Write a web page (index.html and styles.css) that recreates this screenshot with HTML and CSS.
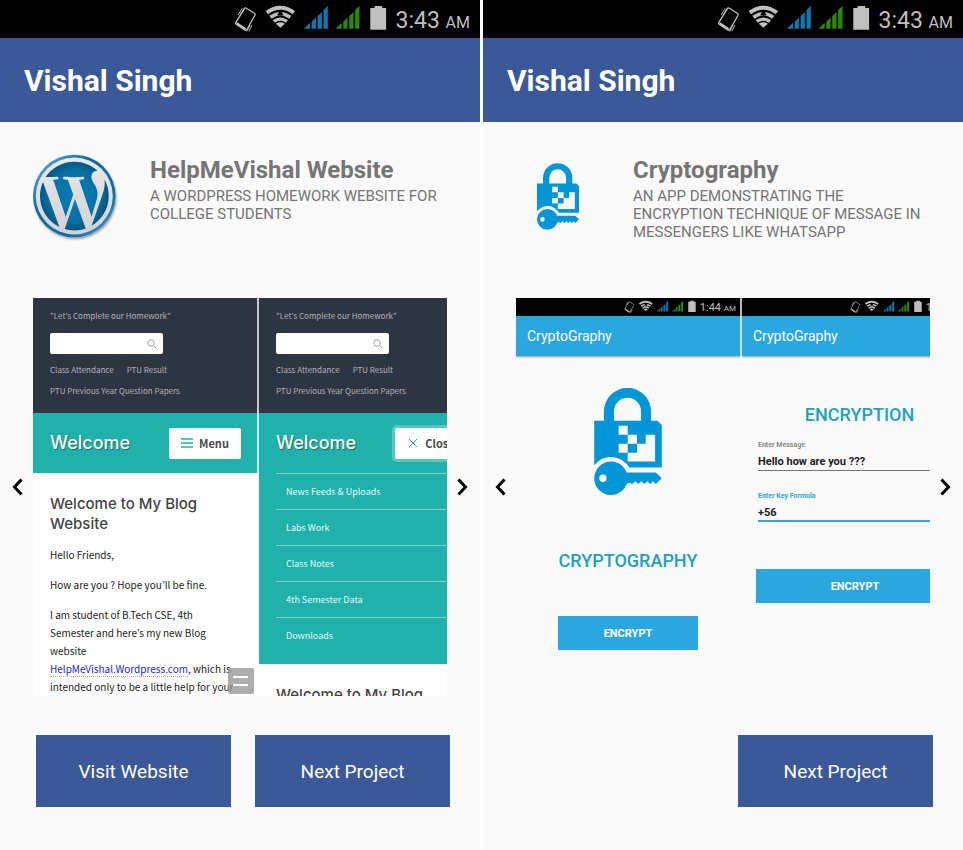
FILE: index.html
```html
<!DOCTYPE html>
<html lang="en">
<head>
<meta charset="utf-8">
<title>Vishal Singh</title>
<link rel="stylesheet" href="styles.css">
</head>
<body>
<svg class="defs" aria-hidden="true">
  <symbol id="status-icons" viewBox="700 15 463 85">
    <g fill="none" stroke="#bfbfbf" stroke-width="4" stroke-linejoin="round">
      <path d="M737 25L762 41Q764 43 763 46L738 90Q736 93 733 91L706 73Q703 71 705 68L731 26Q733 22 737 25Z"/>
      <path d="M707 71L734 89" stroke-width="8"/>
      <path d="M712 46L724 25M718 46L730 25M738 95L748 76M744 95L754 76" stroke-width="3"/>
    </g>
    <g fill="none" stroke="#bfbfbf">
      <path d="M799 38Q840 9 881 38" stroke-width="12"/>
      <path d="M810 52Q840 31 870 52" stroke-width="11"/>
      <path d="M820 65Q840 51 860 65" stroke-width="10"/>
    </g>
    <path d="M826 72Q840 63 854 72L840 84Z" fill="#bfbfbf"/>
    <path d="M840 29L850 47H830Z" fill="#000"/>
    <path d="M912 87L930 69V87ZM935 66L948 53V87H935ZM953 49L966 36V87H953ZM971 31L984 17V87H971Z" fill="#0b78b0"/>
    <path d="M1008 87L1026 69V87ZM1031 66L1044 53V87H1031ZM1049 49L1062 36V87H1049ZM1067 31L1080 17V87H1067Z" fill="#2a8a08"/>
    <path d="M1113 24H1126V18H1149V24H1161V90H1113Z" fill="#bfbfbf"/>
  </symbol>
  <symbol id="lock" viewBox="329 292 202 320">
    <g fill="#0096d8" fill-rule="evenodd">
      <path d="M358 392V362a70 70 0 0 1 141 0V392H469V362a40 40 0 0 0-81 0V392Z"/>
      <path d="M329 390H518L531 403V530H434A63 63 0 0 0 329 523ZM402 405V432H429V405ZM429 432V459H457V432ZM402 459V486H429V459ZM483 432V459H457V486H429V512H511V432Z"/>
      <path d="M329 562a50 50 0 1 1 100 0a50 50 0 1 1-100 0ZM344 562a11 11 0 1 0 22 0a11 11 0 1 0-22 0Z"/>
      <path d="M422 545H513L531 562L513 579L505 571L496 579L488 571L479 579L470 571L461 579L452 571L443 579L434 575L422 580Z"/>
    </g>
  </symbol>
  <symbol id="prev" viewBox="0 0 11 18"><path d="M9.500 1.500L2.500 9L9.500 16.500" fill="none" stroke="#000" stroke-width="3"/></symbol>
  <symbol id="next" viewBox="0 0 11 18"><path d="M1.500 1.500L8.500 9L1.500 16.500" fill="none" stroke="#000" stroke-width="3"/></symbol>
  <symbol id="search" viewBox="0 0 10 10"><g fill="none" stroke="#a5a5a5"><circle cx="4" cy="4" r="3.300"/><path d="M6.500 6.500L9.500 9.500"/></g></symbol>
</svg>

<main class="phones">
  <section class="phone">
    <div class="status"><svg class="status-icons"><use href="#status-icons"/></svg><span class="time">3:43 <small>AM</small></span></div>
    <header class="appbar"><h1>Vishal Singh</h1></header>
    <div class="project">
      <div class="logo">
        <svg class="wp" viewBox="0 0 24 24" role="img" aria-label="WordPress">
          <defs>
            <linearGradient id="rim" x1="0" y1="0" x2="1" y2="1"><stop offset="0" stop-color="#6db8ea"/><stop offset=".35" stop-color="#0b6da3"/><stop offset=".7" stop-color="#0b6da3"/><stop offset="1" stop-color="#4f9fd4"/></linearGradient>
            <linearGradient id="plate" x1="0" y1="0" x2="0" y2="1"><stop offset="0" stop-color="#e9e9ea"/><stop offset="1" stop-color="#d2d2d4"/></linearGradient>
            <radialGradient id="face"><stop offset="0" stop-color="#0a7db5"/><stop offset=".75" stop-color="#0570a6"/><stop offset="1" stop-color="#045480"/></radialGradient>
          </defs>
          <circle cx="11.800" cy="12" r="11.800" fill="url(#rim)"/>
          <circle cx="11.800" cy="12" r="11" fill="url(#plate)"/>
          <path transform="translate(.9 1.100) scale(.91)" fill="url(#face)" d="M21.469 6.825c.84 1.537 1.318 3.300 1.318 5.175 0 3.979-2.156 7.456-5.363 9.325l3.295-9.527c.615-1.540.820-2.771.820-3.864 0-.405-.026-.780-.070-1.110m-7.981.105c.647-.030 1.232-.105 1.232-.105.582-.075.514-.930-.067-.899 0 0-1.755.135-2.880.135-1.064 0-2.850-.150-2.850-.150-.585-.030-.661.855-.075.885 0 0 .540.061 1.125.090l1.680 4.605-2.370 7.080L5.354 6.900c.649-.030 1.234-.100 1.234-.100.585-.075.516-.930-.065-.896 0 0-1.746.138-2.874.138-.200 0-.438-.008-.690-.015C4.911 3.150 8.235 1.215 12 1.215c2.809 0 5.365 1.072 7.286 2.833-.046-.003-.091-.009-.141-.009-1.060 0-1.812.923-1.812 1.914 0 .890.513 1.643 1.060 2.531.411.720.890 1.643.890 2.977 0 .915-.354 1.994-.821 3.479l-1.075 3.585-3.900-11.610zM12 22.784c-1.059 0-2.081-.153-3.048-.437l3.237-9.406 3.315 9.087c.024.053.050.101.078.149-1.120.393-2.325.609-3.582.609M1.211 12c0-1.564.336-3.050.935-4.390L7.290 21.709C3.694 19.960 1.212 16.271 1.211 12"/>
        </svg>
      </div>
      <div class="about">
        <h2>HelpMeVishal Website</h2>
        <p>A WORDPRESS HOMEWORK WEBSITE FOR COLLEGE STUDENTS</p>
      </div>
    </div>
    <div class="carousel">
      <button class="arrow" aria-label="Previous"><svg><use href="#prev"/></svg></button>
      <div class="slides">
        <article class="shot blog">
          <div class="masthead">
            <p>"Let's Complete our Homework"</p>
            <div class="search"><input type="text" aria-label="Search"><svg><use href="#search"/></svg></div>
            <nav><a href="#">Class Attendance</a><a href="#">PTU Result</a><a href="#">PTU Previous Year Question Papers</a></nav>
          </div>
          <div class="banner"><h3>Welcome</h3><button class="toggle"><svg viewBox="0 0 12 10"><path d="M0 1H12M0 5H12M0 9H12" stroke="#20b2aa" stroke-width="1.300"/></svg>Menu</button></div>
          <div class="post">
            <h4>Welcome to My Blog Website</h4>
            <p>Hello Friends,</p>
            <p>How are you ? Hope you’ll be fine.</p>
            <p>I am student of B.Tech CSE, 4th Semester and here’s my new Blog website<br><a href="#">HelpMeVishal.Wordpress.com</a>, which is intended only to be a little help for your</p>
          </div>
          <button class="float" aria-label="Open menu"><svg viewBox="0 0 26 26"><path d="M5 9H20M5 17H20" stroke="#fff" stroke-width="2"/></svg></button>
        </article>
        <article class="shot blog">
          <div class="masthead">
            <p>"Let's Complete our Homework"</p>
            <div class="search"><input type="text" aria-label="Search"><svg><use href="#search"/></svg></div>
            <nav><a href="#">Class Attendance</a><a href="#">PTU Result</a><a href="#">PTU Previous Year Question Papers</a></nav>
          </div>
          <div class="banner"><h3>Welcome</h3><button class="toggle open"><svg viewBox="0 0 12 10"><path d="M2 1L10 9M10 1L2 9" stroke="#20b2aa"/></svg>Close</button></div>
          <ul class="menu">
            <li><a href="#">News Feeds &amp; Uploads</a></li>
            <li><a href="#">Labs Work</a></li>
            <li><a href="#">Class Notes</a></li>
            <li><a href="#">4th Semester Data</a></li>
            <li><a href="#">Downloads</a></li>
          </ul>
          <div class="post"><h4>Welcome to My Blog</h4></div>
        </article>
      </div>
      <button class="arrow" aria-label="Next"><svg><use href="#next"/></svg></button>
    </div>
    <div class="actions"><button class="action">Visit Website</button><button class="action">Next Project</button></div>
  </section>

  <section class="phone">
    <div class="status"><svg class="status-icons"><use href="#status-icons"/></svg><span class="time">3:43 <small>AM</small></span></div>
    <header class="appbar"><h1>Vishal Singh</h1></header>
    <div class="project">
      <div class="logo"><svg class="lock-small"><use href="#lock"/></svg></div>
      <div class="about">
        <h2>Cryptography</h2>
        <p>AN APP DEMONSTRATING THE ENCRYPTION TECHNIQUE OF MESSAGE IN MESSENGERS LIKE WHATSAPP</p>
      </div>
    </div>
    <div class="carousel">
      <button class="arrow" aria-label="Previous"><svg><use href="#prev"/></svg></button>
      <div class="slides">
        <article class="shot crypto">
          <div class="status"><svg class="status-icons"><use href="#status-icons"/></svg><span class="time">1:44 <small>AM</small></span></div>
          <div class="appbar"><h3>CryptoGraphy</h3></div>
          <div class="splash">
            <svg class="lock-large"><use href="#lock"/></svg>
            <h4>CRYPTOGRAPHY</h4>
            <button class="encrypt">ENCRYPT</button>
          </div>
        </article>
        <article class="shot crypto">
          <div class="status"><svg class="status-icons"><use href="#status-icons"/></svg><span class="time">1:44 <small>AM</small></span></div>
          <div class="appbar"><h3>CryptoGraphy</h3></div>
          <form class="form">
            <h4>ENCRYPTION</h4>
            <div class="field"><label for="msg">Enter Message</label><input id="msg" type="text" value="Hello how are you ???"></div>
            <div class="field active"><label for="key">Enter Key Formula</label><input id="key" type="text" value="+56"></div>
            <button class="encrypt" type="button">ENCRYPT</button>
          </form>
        </article>
      </div>
      <button class="arrow" aria-label="Next"><svg><use href="#next"/></svg></button>
    </div>
    <div class="actions"><button class="action last">Next Project</button></div>
  </section>
</main>
</body>
</html>
```
FILE: styles.css
```css
* { box-sizing: border-box; }
body, h1, h2, h3, h4, p, ul { margin: 0; padding: 0; }
body { background: #fff; font-family: Roboto, "Liberation Sans", sans-serif; }
button, input { font: inherit; border: 0; padding: 0; margin: 0; border-radius: 0; }
svg { display: block; }
.defs { position: absolute; width: 0; height: 0; }

.phones { display: grid; grid-template-columns: 1fr 1fr; gap: 3px; min-height: 100vh; }
.phone { background: #fafafa; min-width: 0; }

.status { display: flex; align-items: center; justify-content: flex-end; gap: 8px; height: 38px; padding-right: 10px; background: #000; color: #bfbfbf; }
.status-icons { width: 155px; height: 28px; flex: none; }
.time { padding-top: 2px; font-size: 23px; white-space: nowrap; }
.time small { font-size: 16px; }
.appbar { display: flex; align-items: center; height: 84px; padding-left: 24px; background: #3b5998; color: #fff; }
.appbar h1 { font-size: 30px; font-weight: 700; }

.project { display: grid; grid-template-columns: 84px 1fr; gap: 33px; align-items: start; min-height: 176px; padding: 31px 30px 0 33px; color: #757575; }
.logo { display: grid; place-items: center; height: 86px; }
.wp { width: 84px; height: 84px; filter: drop-shadow(1px 2px 1px #0005); }
.lock-small { width: 42px; height: 67px; }
.about { padding-top: 3px; }
.about h2 { font-size: 24px; line-height: 28px; font-weight: 700; }
.about p { padding-top: 3px; font-size: 15px; line-height: 18px; }

.carousel { display: grid; grid-template-columns: 33px minmax(0, 1fr) 33px; height: 398px; }
.arrow { display: flex; align-items: center; justify-content: flex-end; padding: 0 10px; padding-bottom: 20px; background: none; }
.arrow:last-child { justify-content: flex-start; }
.arrow svg { width: 11px; height: 18px; }
.slides { display: flex; overflow: hidden; }
.shot { position: relative; flex: 0 0 226px; height: 100%; overflow: hidden; }
.shot::after { content: ""; position: absolute; top: 0; right: 0; width: 2px; height: 100%; background: #fffb; }

.blog { background: #fff; font-family: "Noto Sans CJK KR", "Noto Sans", sans-serif; }
.masthead { height: 115px; padding: 10px 17px 0; background: #2e3542; color: #b0b3b8; font-size: 8px; line-height: 16px; }
.search { position: relative; width: 113px; margin-top: 9px; }
.search input { display: block; width: 100%; height: 21px; padding: 0 20px 0 6px; border-radius: 2px; background: #fff; }
.search svg { position: absolute; top: 6px; right: 6px; width: 10px; height: 10px; }
.masthead nav { display: flex; flex-wrap: wrap; gap: 5px 13px; margin-top: 8px; }
.masthead a { color: inherit; text-decoration: none; }
.banner { display: flex; align-items: center; justify-content: space-between; height: 60px; padding: 0 18px 0 17px; background: #20b2aa; }
.banner h3 { color: #fff; font: 500 18px/24px Inter, sans-serif; text-shadow: 1px 1px 1px #0006; }
.toggle { display: flex; align-items: center; justify-content: center; gap: 6px; width: 72px; height: 31px; border-radius: 2px; background: #fff; color: #4a4a4a; font-size: 11px; font-weight: 700; }
.toggle svg { width: 12px; height: 10px; }
.toggle.open { box-shadow: 0 0 0 3px #fff4; }
.post { padding: 21px 22px 0 17px; color: #222; font-size: 10px; line-height: 18px; }
.post h4 { color: #444; font: 500 15px/20px Inter, sans-serif; }
.post p { margin-top: 12px; }
.post a { color: #1a1aff; text-decoration: none; border-bottom: 1px dotted #aaa; }
.float { position: absolute; right: 5px; bottom: 2px; width: 26px; height: 26px; border-radius: 2px; background: #999c; }
.menu { height: 191px; padding-left: 17px; background: #20b2aa; list-style: none; }
.menu li { height: 36px; padding-left: 10px; border-top: 1px solid #fff6; font-size: 9px; line-height: 35px; }
.menu a { color: #e9f7f6; text-decoration: none; }

.crypto { background: #fafafa; }
.crypto::after { background: #fafafabb; }
.crypto .status { height: 18px; gap: 4px; padding-right: 6px; }
.crypto .status-icons { width: 72px; height: 14px; }
.crypto .time { padding-top: 1px; font-size: 11px; }
.crypto .time small { font-size: 8px; }
.crypto .appbar { height: 40px; padding-left: 11px; background: #2ba7df; box-shadow: 0 1px 2px #0006; }
.crypto h3 { font-size: 14px; font-weight: 400; }
.crypto h4 { color: #1ca1c0; font-size: 18px; line-height: 24px; font-weight: 500; }
.encrypt { height: 34px; background: #2ba7df; color: #fff; font-size: 11px; font-weight: 700; }
.splash { display: flex; flex-direction: column; align-items: center; padding: 32px 2px 0 0; }
.lock-large { width: 68px; height: 107px; }
.splash h4 { margin: 54px 0 43px; }
.splash .encrypt { width: 140px; }
.form { display: flex; flex-direction: column; padding: 47px 14px 0; }
.form h4 { padding-left: 9px; text-align: center; }
.field { display: flex; flex-direction: column; height: 51px; padding: 0 0 0 2px; margin-right: -14px; }
.field:first-of-type { margin-top: 13px; }
.field label { color: #888; font-size: 7px; line-height: 10px; font-weight: 700; }
.field input { height: 21px; padding-top: 3px; border-bottom: 1px solid #777; background: none; color: #212121; font-size: 11px; font-weight: 700; }
.field.active label { color: #2ba7df; }
.field.active input { border-bottom: 2px solid #2ba7df; }
.form .encrypt { margin-top: 27px; }

.actions { display: grid; grid-template-columns: 1fr 1fr; gap: 24px; padding: 39px 30px 43px 36px; }
.action { height: 72px; background: #3b5998; color: #fff; font-size: 19px; }
.action.last { grid-column: 2; }
```
